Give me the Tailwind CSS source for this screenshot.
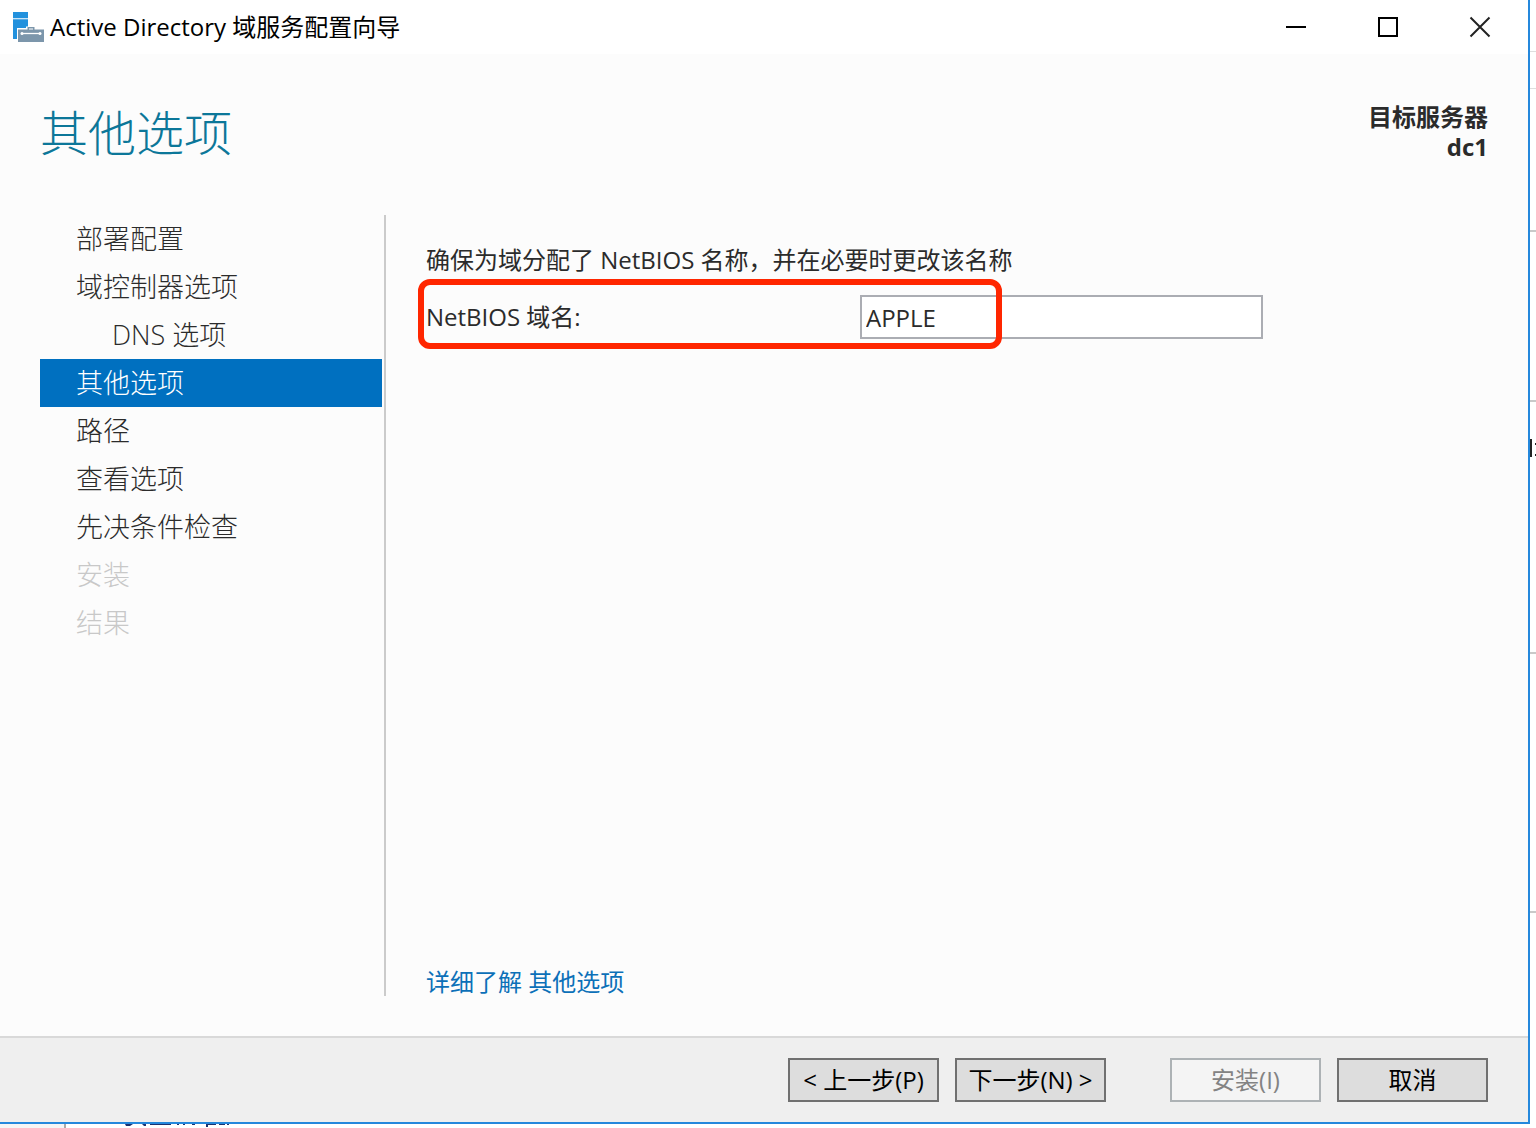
<!DOCTYPE html>
<html lang="zh-CN">
<head>
<meta charset="utf-8">
<title>Active Directory 域服务配置向导</title>
<script src="https://cdn.jsdelivr.net/npm/@tailwindcss/browser@4"></script>
</head>
<body class="min-h-screen flex flex-col bg-white text-2xl text-[#2b2b2b] font-['Open_Sans','Noto_Sans_CJK_SC',sans-serif]">
<div class="flex-1 flex">
  <div class="flex-1 flex flex-col bg-[#fcfcfc] border-r-2 border-b-2 border-[#2588dc]">
    <header class="h-[54px] flex items-center bg-white text-black pl-3 pr-0.5">
      <svg class="w-8 h-8 shrink-0" viewBox="0 0 32 32" aria-hidden="true">
        <path fill="#2291dd" d="M1 1h15v27H1z"/>
        <path fill="#fff" d="M1 7.300h15v1h-15zM14 15.500h10v2h9v14H5V17h9z"/>
        <path fill="#7c96ab" d="M6 18.500h9.500V16h7v2.500H32V31H6z"/>
        <path fill="#fff" d="M17 17.500h4v1h-4z"/>
        <path stroke="#fff" stroke-width="1.300" d="M9 22.500h20"/>
        <circle cx="10" cy="22.500" r="1.500" fill="#fff"/><circle cx="28" cy="22.500" r="1.500" fill="#fff"/>
      </svg>
      <h1 class="flex-1 pl-1.5">Active Directory 域服务配置向导</h1>
      <div class="flex">
        <button aria-label="最小化" class="w-23 h-13 grid place-items-center"><svg class="w-6 h-6" viewBox="0 0 24 24" stroke="#000" stroke-width="2"><path d="M2 12h20"/></svg></button>
        <button aria-label="最大化" class="w-23 h-13 grid place-items-center"><svg class="w-6 h-6" viewBox="0 0 24 24" stroke="#000" stroke-width="2" fill="none"><path d="M3 3h18v18H3z"/></svg></button>
        <button aria-label="关闭" class="w-23 h-13 grid place-items-center"><svg class="w-6 h-6" viewBox="0 0 24 24" stroke="#222" stroke-width="2"><path d="M2.500 2.500l19 19M21.500 2.500l-19 19"/></svg></button>
      </div>
    </header>
    <div class="h-[161px] flex justify-between pl-10 pr-10 pt-12">
      <h2 class="text-5xl leading-[62px] font-light text-[#0c7799]">其他选项</h2>
      <p class="text-right font-bold leading-[30px]">目标服务器<br>dc1</p>
    </div>
    <div class="flex-1 flex pl-10 pb-10">
      <nav class="w-[346px] border-r-2 border-[#cbcbcb] text-[27px] leading-12 font-light whitespace-nowrap pr-0.5">
        <ul>
          <li class="pl-9"><a href="#">部署配置</a></li>
          <li class="pl-9"><a href="#">域控制器选项</a></li>
          <li class="pl-18"><a href="#">DNS 选项</a></li>
          <li class="pl-9 bg-[#0070c0] text-white"><a href="#" aria-current="step">其他选项</a></li>
          <li class="pl-9"><a href="#">路径</a></li>
          <li class="pl-9"><a href="#">查看选项</a></li>
          <li class="pl-9"><a href="#">先决条件检查</a></li>
          <li class="pl-9 text-[#c8c8c8]">安装</li>
          <li class="pl-9 text-[#c8c8c8]">结果</li>
        </ul>
      </nav>
      <main class="flex-1 flex flex-col pl-10 pt-6.5">
        <p class="leading-[38px]">确保为域分配了 NetBIOS 名称，并在必要时更改该名称</p>
        <div class="relative flex items-center mt-4">
          <label for="netbios" class="w-[434px]">NetBIOS 域名:</label>
          <input id="netbios" value="APPLE" class="w-[403px] h-11 px-1 border-2 border-[#abadb3] bg-white">
          <div class="absolute -left-2 -top-4 w-[584px] h-[70px] border-6 border-[#ff2600] rounded-xl pointer-events-none"></div>
        </div>
        <a href="#" class="mt-auto self-start leading-7 text-[#0c70b8]">详细了解 其他选项</a>
      </main>
    </div>
    <footer class="h-[86px] flex justify-end bg-[#efefef] border-t-2 border-[#d9d9d9] pt-5 pr-10 text-black">
      <button class="w-[151px] h-11 mr-4 border-2 border-[#707070] bg-[#dddddd]">&lt; 上一步(P)</button>
      <button class="w-[151px] h-11 mr-16 border-2 border-[#707070] bg-[#dddddd]">下一步(N) &gt;</button>
      <button disabled class="w-[151px] h-11 mr-4 border-2 border-[#adb2b5] bg-[#f4f4f4] text-[#838383]">安装(I)</button>
      <button class="w-[151px] h-11 border-2 border-[#707070] bg-[#dddddd]">取消</button>
    </footer>
  </div>
  <svg class="w-1.5 shrink-0" aria-hidden="true">
    <path d="M0 51.500h6M0 88.500h6" stroke="#dedede"/>
    <path d="M0 231h6M0 401h6M0 653h6M0 912h6" stroke="#c9c9c9" stroke-width="2"/>
    <path d="M1 439v18M5 444h1M5 455h1" stroke="#222" stroke-width="2"/>
  </svg>
</div>
<svg class="h-1 w-full" aria-hidden="true">
  <path d="M0 0h64v4H0z" fill="#f5f5f5"/><path d="M65 0v4" stroke="#aaa" stroke-width="2"/>
  <path d="M125 0h8l-3 2h-4zM142 0h4v2h-2zM150 0h21v1h-21zM177 0h2v1h-2zM183 0h2v1h-2zM192 0h3v1h-3zM206 0h10v1h-8v2h-2zM219 0h6v1h-6zM227 0h2v1h-2z" fill="#1b326f"/>
</svg>
</body>
</html>
